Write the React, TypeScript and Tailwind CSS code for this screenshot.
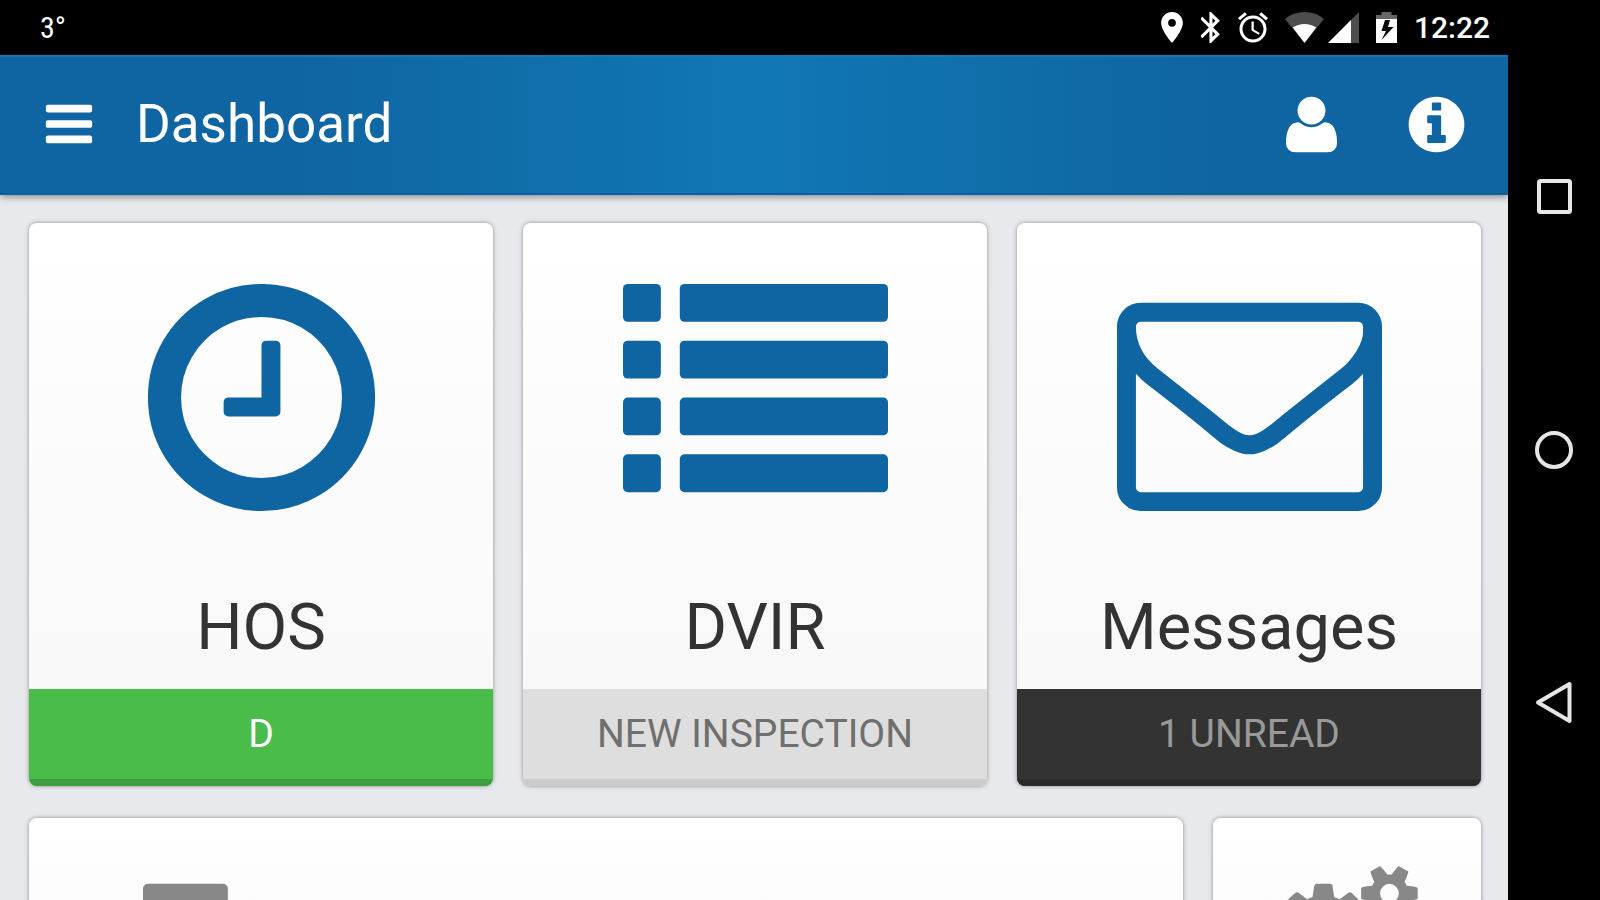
import type { ReactNode } from 'react';
import { MdAccessAlarm, MdBluetooth, MdLocationOn } from 'react-icons/md';

const icons = {
  bars: 'M1664 1344v128q0 26-19 45t-45 19h-1408q-26 0-45-19t-19-45v-128q0-26 19-45t45-19h1408q26 0 45 19t19 45zm0-512v128q0 26-19 45t-45 19h-1408q-26 0-45-19t-19-45v-128q0-26 19-45t45-19h1408q26 0 45 19t19 45zm0-512v128q0 26-19 45t-45 19h-1408q-26 0-45-19t-19-45v-128q0-26 19-45t45-19h1408q26 0 45 19t19 45z',
  user: 'M1600 1405q0 120-73 189.5t-194 69.5h-874q-121 0-194-69.5t-73-189.5q0-53 3.5-103.5t14-109 26.5-108.5 43-97.5 62-81 85.5-53.5 111.5-20q9 0 42 21.5t74.5 48 108 48 133.5 21.5 133.5-21.5 108-48 74.5-48 42-21.5q61 0 111.5 20t85.5 53.5 62 81 43 97.5 26.5 108.5 14 109 3.5 103.5zm-320-893q0 159-112.5 271.5t-271.5 112.5-271.5-112.5-112.5-271.5 112.5-271.5 271.5-112.5 271.5 112.5 112.5 271.5z',
  info: 'M1152 1376v-160q0-14-9-23t-23-9h-96v-512q0-14-9-23t-23-9h-320q-14 0-23 9t-9 23v160q0 14 9 23t23 9h96v320h-96q-14 0-23 9t-9 23v160q0 14 9 23t23 9h448q14 0 23-9t9-23zm-128-896v-160q0-14-9-23t-23-9h-192q-14 0-23 9t-9 23v160q0 14 9 23t23 9h192q14 0 23-9t9-23zm640 416q0 209-103 385.5t-279.5 279.5-385.5 103-385.5-103-279.5-279.5-103-385.5 103-385.5 279.5-279.5 385.5-103 385.5 103 279.5 279.5 103 385.5z',
  clock: 'M1024 544v448q0 14-9 23t-23 9h-320q-14 0-23-9t-9-23v-64q0-14 9-23t23-9h224v-352q0-14 9-23t23-9h64q14 0 23 9t9 23zm416 352q0-148-73-273t-198-198-273-73-273 73-198 198-73 273 73 273 198 198 273 73 273-73 198-198 73-273zm224 0q0 209-103 385.5t-279.5 279.5-385.5 103-385.5-103-279.5-279.5-103-385.5 103-385.5 279.5-279.5 385.5-103 385.5 103 279.5 279.5 103 385.5z',
  envelope: 'M1664 1504v-768q-32 36-69 66-268 206-426 338-51 43-83 67t-86.5 48.5-102.5 24.5h-2q-48 0-102.5-24.5t-86.5-48.5-83-67q-158-132-426-338-37-30-69-66v768q0 13 9.5 22.5t22.5 9.5h1472q13 0 22.5-9.5t9.5-22.5zm0-1051v-24.5l-.5-13-3-12.5-5.5-9-9-7.5-14-2.5h-1472q-13 0-22.5 9.5t-9.5 22.5q0 168 147 284 193 152 401 317 6 5 35 29.5t46 37.5 44.5 31.5 50.5 27.5 43 9h2q20 0 43-9t50.5-27.5 44.5-31.5 46-37.5 35-29.5q208-165 401-317 54-43 100.5-115.5t46.5-131.5zm128-37v1088q0 66-47 113t-113 47h-1472q-66 0-113-47t-47-113v-1088q0-66 47-113t113-47h1472q66 0 113 47t47 113z',
  truck: 'M640 1408q0-52-38-90t-90-38-90 38-38 90 38 90 90 38 90-38 38-90zm-384-512h384v-256h-158q-13 0-22 9l-195 195q-9 9-9 22v30zm1280 512q0-52-38-90t-90-38-90 38-38 90 38 90 90 38 90-38 38-90zm256-1088v1024q0 15-4 26.5t-13.5 18.5-16.5 11.5-23.5 6-22.5 2-25.5 0-22.5-.5q0 106-75 181t-181 75-181-75-75-181h-384q0 106-75 181t-181 75-181-75-75-181h-64q-3 0-22.5.5t-25.5 0-22.5-2-23.5-6-16.5-11.5-13.5-18.5-4-26.5q0-26 19-45t45-19v-320q0-8-.5-35t0-38 2.5-34.5 6.5-37 14-30.5 22.5-30l198-198q19-19 50.5-32t58.5-13h160v-192q0-26 19-45t45-19h1024q26 0 45 19t19 45z',
  cogs: 'M896 896q0-106-75-181t-181-75-181 75-75 181 75 181 181 75 181-75 75-181zm768 512q0-52-38-90t-90-38-90 38-38 90q0 53 37.5 90.5t90.5 37.5 90.5-37.5 37.5-90.5zm0-1024q0-52-38-90t-90-38-90 38-38 90q0 53 37.5 90.5t90.5 37.5 90.5-37.5 37.5-90.5zm-384 421v185q0 10-7 19.5t-16 10.5l-155 24q-11 35-32 76 34 48 90 115 7 11 7 20 0 12-7 19-23 30-82.5 89.5t-78.5 59.5q-11 0-21-7l-115-90q-37 19-77 31-11 108-23 155-7 24-30 24h-186q-11 0-20-7.5t-10-17.5l-23-153q-34-10-75-31l-118 89q-7 7-20 7-11 0-21-8-144-133-144-160 0-9 7-19 10-14 41-53t47-61q-23-44-35-82l-152-24q-10-1-17-9.5t-7-19.5v-185q0-10 7-19.5t16-10.5l155-24q11-35 32-76-34-48-90-115-7-11-7-20 0-12 7-20 22-30 82-89t79-59q11 0 21 7l115 90q34-18 77-32 11-108 23-154 7-24 30-24h186q11 0 20 7.5t10 17.5l23 153q34 10 75 31l118-89q8-7 20-7 11 0 21 8 144 133 144 160 0 8-7 19-12 16-42 54t-45 60q23 48 34 82l152 23q10 2 17 10.5t7 19.5zm640 533v140q0 16-149 31-12 27-30 52 51 113 51 138 0 4-4 7-122 71-124 71-8 0-46-47t-52-68q-20 2-30 2t-30-2q-14 21-52 68t-46 47q-2 0-124-71-4-3-4-7 0-25 51-138-18-25-30-52-149-15-149-31v-140q0-16 149-31 13-29 30-52-51-113-51-138 0-4 4-7 4-2 35-20t59-34 30-16q8 0 46 46.5t52 67.5q20-2 30-2t30 2q51-71 92-112l6-2q4 0 124 70 4 3 4 7 0 25-51 138 17 23 30 52 149 15 149 31zm0-1024v140q0 16-149 31-12 27-30 52 51 113 51 138 0 4-4 7-122 71-124 71-8 0-46-47t-52-68q-20 2-30 2t-30-2q-14 21-52 68t-46 47q-2 0-124-71-4-3-4-7 0-25 51-138-18-25-30-52-149-15-149-31v-140q0-16 149-31 13-29 30-52-51-113-51-138 0-4 4-7 4-2 35-20t59-34 30-16q8 0 46 46.5t52 67.5q20-2 30-2t30 2q51-71 92-112l6-2q4 0 124 70 4 3 4 7 0 25-51 138 17 23 30 52 149 15 149 31z',
};

type IconProps = { d: string; className: string; viewBox?: string };

function Icon({ d, className, viewBox = '0 0 1792 1792' }: IconProps) {
  return (
    <svg viewBox={viewBox} className={className} fill="currentColor" aria-hidden="true">
      <path d={d} />
    </svg>
  );
}

function ListIcon({ className }: { className: string }) {
  return (
    <svg viewBox="0 0 1792 1792" className={className} fill="currentColor" aria-hidden="true">
      {[128, 512, 896, 1280].map((y) => (
        <g key={y}>
          <rect x="0" y={y} width="256" height="256" rx="32" />
          <rect x="384" y={y} width="1408" height="256" rx="32" />
        </g>
      ))}
    </svg>
  );
}

function StatusBar() {
  return (
    <div className="flex h-[55px] shrink-0 items-center justify-between bg-black pr-[18px] pl-10 text-white">
      <span className="font-['Roboto_Condensed','Liberation_Sans_Narrow',Roboto,sans-serif] text-[30px] leading-none">3°</span>
      <div className="flex items-center gap-[17px]">
        <div className="flex items-center gap-[18px]">
          <MdLocationOn viewBox="5 2 14 20" className="h-[31px] w-[22px]" />
          <MdBluetooth viewBox="5.7 2 12 20" className="h-[31px] w-[19px]" />
          <MdAccessAlarm viewBox="2 2 20 20" className="h-[31px] w-[30px]" />
        </div>
        {/* wifi and cell signal */}
        <svg viewBox="0 0 74 31" className="h-[31px] w-[74px]" fill="currentColor" aria-hidden="true">
          <path d="M19.5 31 0 7Q8 0 19.5 0T39 7z" fillOpacity=".3" />
          <path d="M19.5 31 7.800 15.500Q13 12 19.500 12T31.200 15.500z" />
          <path d="M74 0v31H43z" fillOpacity=".3" />
          <path d="M66 8v23H43z" />
        </svg>
        <svg viewBox="0 0 21 31" className="h-[31px] w-[21px]" fill="currentColor" aria-hidden="true">
          <path d="M0 7V3h5.500V0h10v3H21v4z" fillOpacity=".4" />
          <path fillRule="evenodd" d="M0 7h21v24H0zM14 8H9L5.500 19H10L5.500 28 17.500 15H12z" />
        </svg>
        <span className="text-[30px] leading-none font-medium">12:22</span>
      </div>
    </div>
  );
}

function Header() {
  return (
    <header className="z-10 flex h-[140px] shrink-0 items-center border-y-2 border-t-[#1177b5] border-b-[#0a62a3] bg-[#0f65a2] bg-linear-to-r from-[#0f65a2] from-20% via-[#1177b5] via-50% to-[#0f65a2] to-80% pr-[39px] pb-0.5 pl-[42px] text-white shadow-[0_1px_8px_rgba(0,0,0,0.5)]">
      <button type="button" aria-label="Menu">
        <Icon d={icons.bars} className="size-[54px]" />
      </button>
      <h1 className="ml-10 flex-1 text-[53px] leading-none">Dashboard</h1>
      <div className="flex items-center gap-[60px]">
        <button type="button" aria-label="Account">
          <Icon d={icons.user} className="size-[65px]" />
        </button>
        <button type="button" aria-label="Info">
          <Icon d={icons.info} className="size-[65px]" />
        </button>
      </div>
    </header>
  );
}

type TileProps = { title: string; status: string; statusClass: string; icon: ReactNode };

function Tile({ title, status, statusClass, icon }: TileProps) {
  return (
    <button
      type="button"
      className="flex flex-col overflow-hidden rounded-lg bg-linear-to-b from-white to-[#f7f7f7] shadow-[0_0_4px_rgba(0,0,0,0.4)]"
    >
      <span className="flex w-full flex-col items-center pt-[42px] pb-[22px] text-[#0f65a2]">
        {icon}
        <span className="mt-[57px] text-[65px] leading-[80px] text-[#333]">{title}</span>
      </span>
      <span className={`w-full border-b-[7px] py-[21px] text-[39px] leading-12 uppercase ${statusClass}`}>
        {status}
      </span>
    </button>
  );
}

function NavBar() {
  return (
    <nav className="flex w-[92px] shrink-0 flex-col justify-center bg-black text-[#e6e6e6]">
      <button type="button" aria-label="Recent apps" className="flex h-[28%] items-center justify-center">
        <svg viewBox="0 0 40 44" className="h-11 w-10" fill="none" stroke="currentColor" strokeWidth="4" aria-hidden="true">
          <rect x="5" y="5" width="31" height="31" rx="1.500" />
        </svg>
      </button>
      <button type="button" aria-label="Home" className="flex h-[28%] items-center justify-center">
        <svg viewBox="0 0 40 44" className="h-11 w-10" fill="none" stroke="currentColor" strokeWidth="4" aria-hidden="true">
          <circle cx="20" cy="22" r="17" />
        </svg>
      </button>
      <button type="button" aria-label="Back" className="flex h-[28%] items-center justify-center">
        <svg viewBox="0 0 40 44" className="h-11 w-10" fill="none" stroke="currentColor" strokeWidth="4" strokeLinejoin="round" aria-hidden="true">
          <path d="M35.500 4v37L4 22.500z" />
        </svg>
      </button>
    </nav>
  );
}

export default function App() {
  return (
    <div className="flex h-screen overflow-hidden bg-black font-[Roboto,sans-serif]">
      <div className="flex min-w-0 flex-1 flex-col">
        <StatusBar />
        <Header />
        <main className="min-h-0 flex-1 overflow-hidden bg-[#e8e9ed] pt-7 pr-[27px] pl-[29px]">
          <div className="grid grid-cols-3 gap-[30px]">
            <Tile
              title="HOS"
              status="D"
              statusClass="border-[#3e9e3e] bg-[#4abc4a] text-white"
              icon={<Icon d={icons.clock} className="size-[265px]" />}
            />
            <Tile
              title="DVIR"
              status="New Inspection"
              statusClass="border-[#cbcbcb] bg-[#dedede] text-[#6f6f6f]"
              icon={<ListIcon className="size-[265px]" />}
            />
            <Tile
              title="Messages"
              status="1 Unread"
              statusClass="border-[#2a2a2a] bg-[#333] text-[#999]"
              icon={<Icon d={icons.envelope} className="size-[265px]" />}
            />
          </div>
          <div className="mt-8 grid grid-cols-[1fr_268px] gap-[30px] text-[#888]">
            <button
              type="button"
              aria-label="Vehicle"
              className="flex h-[280px] items-start rounded-lg bg-linear-to-b from-white to-[#f7f7f7] pt-[47px] pl-[114px] shadow-[0_0_4px_rgba(0,0,0,0.4)]"
            >
              <Icon d={icons.truck} className="size-[132px] -scale-x-100" />
            </button>
            <button
              type="button"
              aria-label="Settings"
              className="flex h-[280px] items-start justify-center rounded-lg bg-linear-to-b from-white to-[#f7f7f7] pt-[47px] shadow-[0_0_4px_rgba(0,0,0,0.4)]"
            >
              <Icon d={icons.cogs} viewBox="0 0 1920 1792" className="h-[132px] w-[142px]" />
            </button>
          </div>
        </main>
      </div>
      <NavBar />
    </div>
  );
}
